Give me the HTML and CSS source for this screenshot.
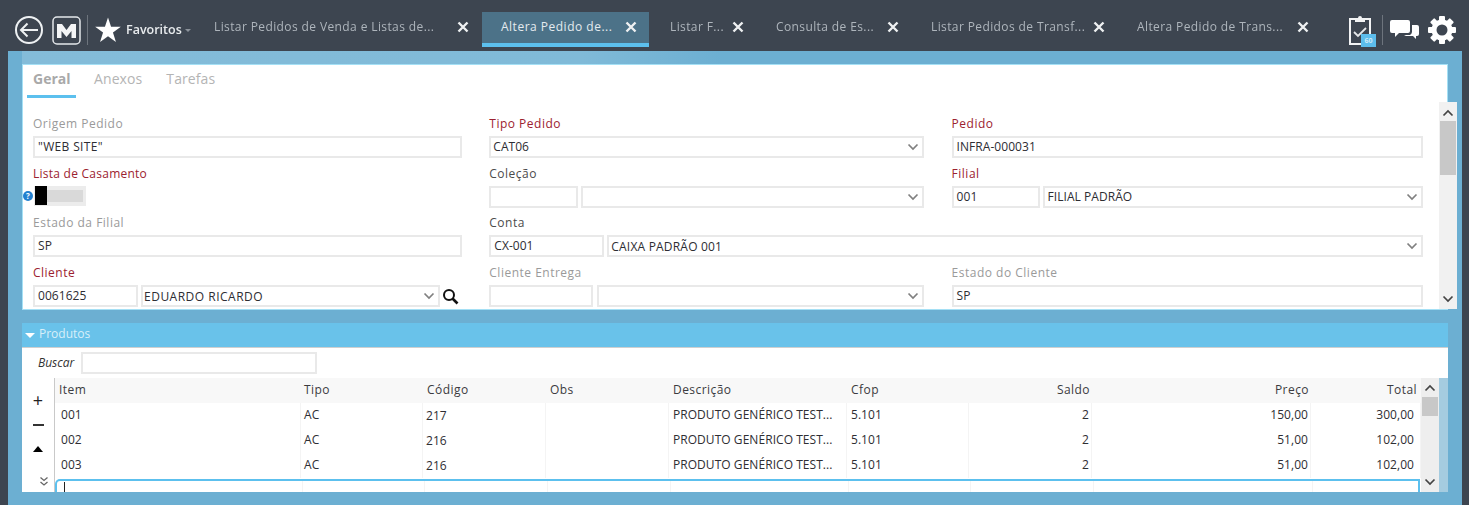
FILE: index.html
```html
<!DOCTYPE html>
<html lang="pt-BR">
<head>
<meta charset="utf-8">
<title>Altera Pedido de Venda</title>
<link rel="stylesheet" href="styles.css">
</head>
<body>
<svg class="defs" width="0" height="0" aria-hidden="true">
  <symbol id="chev" viewBox="0 0 12 8"><path d="M1.500 1.500 6 6l4.500-4.500" fill="none" stroke="currentColor" stroke-width="1.700"/></symbol>
  <symbol id="close" viewBox="0 0 12 12"><path d="M1.500 1.500l9 9M10.500 1.500l-9 9" fill="none" stroke="currentColor" stroke-width="2.400"/></symbol>
</svg>

<header class="topbar">
  <div class="brand">
    <svg class="ic-back" viewBox="0 0 30 30"><circle cx="15" cy="15" r="13" fill="none" stroke="#eef1f3" stroke-width="2"/><path d="M7 15h17M13.500 8.500 7 15l6.500 6.500" fill="none" stroke="#eef1f3" stroke-width="2"/></svg>
    <svg class="ic-m" viewBox="0 0 29 29"><rect x="1" y="1" width="27" height="27" rx="4" fill="none" stroke="#e4e7ea" stroke-width="1.500"/><path d="M5 22V8h5l4.500 6L19 8h5v14h-4.500v-7L14.500 21l-5-6v7z" fill="#f4f5f6"/></svg>
    <span class="vsep"></span>
    <svg class="ic-star" viewBox="0 0 26 26"><path d="M13 .5l3.060 9.290 9.780.04-7.890 5.770 2.990 9.320L13 19.200l-7.940 5.720 2.990-9.320L.16 9.830l9.780-.04z" fill="#fff"/></svg>
    <span class="fav">Favoritos</span><span class="fav-caret"></span>
  </div>
  <nav class="tabs">
    <div class="tab t1"><span>Listar Pedidos de Venda e Listas de...</span><svg class="x"><use href="#close"/></svg></div>
    <div class="tab t2 active"><span>Altera Pedido de...</span><svg class="x"><use href="#close"/></svg></div>
    <div class="tab t3"><span>Listar F...</span><svg class="x"><use href="#close"/></svg></div>
    <div class="tab t4"><span>Consulta de Es...</span><svg class="x"><use href="#close"/></svg></div>
    <div class="tab t5"><span>Listar Pedidos de Transf...</span><svg class="x"><use href="#close"/></svg></div>
    <div class="tab t6"><span>Altera Pedido de Trans...</span><svg class="x"><use href="#close"/></svg></div>
  </nav>
  <div class="tools">
    <div class="clip">
      <svg class="ic-clip" viewBox="0 0 24 30"><path d="M7 4H2v25h20V4h-5" fill="none" stroke="#f2f3f4" stroke-width="2"/><path d="M7 7V3h3a2 2 0 0 1 4 0h3v4z" fill="#f2f3f4"/><path d="M6 17l4 4 8-8" fill="none" stroke="#e6e8ea" stroke-width="1.800"/></svg>
      <span class="badge">60</span>
    </div>
    <span class="vsep vsep-r"></span>
    <svg class="ic-chat" viewBox="0 0 29 20"><path d="M2 0h16a2 2 0 0 1 2 2v9a2 2 0 0 1-2 2H9l-4 4v-4H2a2 2 0 0 1-2-2V2a2 2 0 0 1 2-2z" fill="#fff"/><path d="M22 5h5a2 2 0 0 1 2 2v7a2 2 0 0 1-2 2h-1v3l-3-3h-7l-2-1h6a4 4 0 0 0 2-3z" fill="#fff"/></svg>
    <svg class="ic-gear" viewBox="0 0 28 28">
      <g fill="#fff">
        <rect x="11" y="0" width="6" height="28" rx="1"/>
        <rect x="11" y="0" width="6" height="28" rx="1" transform="rotate(45 14 14)"/>
        <rect x="11" y="0" width="6" height="28" rx="1" transform="rotate(90 14 14)"/>
        <rect x="11" y="0" width="6" height="28" rx="1" transform="rotate(135 14 14)"/>
      </g>
      <circle cx="14" cy="14" r="8" fill="none" stroke="#fff" stroke-width="5"/>
      <circle cx="14" cy="14" r="5.500" fill="#3d4550"/>
    </svg>
  </div>
</header>

<main class="workspace">
  <div class="strip"></div>
  <section class="panel form-panel">
    <div class="subtabs">
      <span class="subtab on">Geral</span>
      <span class="subtab">Anexos</span>
      <span class="subtab">Tarefas</span>
    </div>
    <div class="form-wrap">
      <div class="form">
        <div class="field"><label class="lbl">Origem Pedido</label><div class="inp wide">"WEB SITE"</div></div>
        <div class="field"><label class="lbl req">Tipo Pedido</label><div class="inp sel tipo">CAT06<svg class="chev"><use href="#chev"/></svg></div></div>
        <div class="field"><label class="lbl req">Pedido</label><div class="inp">INFRA-000031</div></div>

        <div class="field help-host"><label class="lbl req tight">Lista de Casamento</label>
          <span class="help">?</span>
          <div class="toggle"><span class="knob"></span><span class="track"></span></div>
        </div>
        <div class="field"><label class="lbl dark">Coleção</label>
          <div class="pair p-col"><div class="inp"></div><div class="inp sel"><svg class="chev"><use href="#chev"/></svg></div></div></div>
        <div class="field"><label class="lbl req">Filial</label>
          <div class="pair p-fil"><div class="inp">001</div><div class="inp sel">FILIAL PADRÃO<svg class="chev"><use href="#chev"/></svg></div></div></div>

        <div class="field"><label class="lbl">Estado da Filial</label><div class="inp">SP</div></div>
        <div class="field span2"><label class="lbl dark">Conta</label>
          <div class="pair p-con"><div class="inp">CX-001</div><div class="inp sel">CAIXA PADRÃO 001<svg class="chev"><use href="#chev"/></svg></div></div></div>

        <div class="field"><label class="lbl req">Cliente</label>
          <div class="pair p-cli"><div class="inp">0061625</div><div class="inp sel">EDUARDO RICARDO<svg class="chev"><use href="#chev"/></svg></div>
            <svg class="ic-search" viewBox="0 0 17 17"><circle cx="7" cy="7" r="5" fill="none" stroke="#111" stroke-width="2"/><path d="M10.500 10.500 15.500 15.500" stroke="#111" stroke-width="2.600"/></svg></div></div>
        <div class="field"><label class="lbl">Cliente Entrega</label>
          <div class="pair p-ent"><div class="inp"></div><div class="inp sel"><svg class="chev"><use href="#chev"/></svg></div></div></div>
        <div class="field"><label class="lbl">Estado do Cliente</label><div class="inp">SP</div></div>
      </div>
      <div class="vscroll form-scroll">
        <svg class="arrow up"><use href="#chev"/></svg>
        <div class="thumb"></div>
        <svg class="arrow"><use href="#chev"/></svg>
      </div>
    </div>
  </section>

  <section class="products">
    <div class="products-head"><span class="tri"></span>Produtos</div>
    <div class="products-body">
      <div class="search"><em>Buscar</em><div class="inp search-inp"></div></div>
      <div class="grid-area">
        <div class="tools-col">
          <span class="t-plus">+</span>
          <span class="t-minus"></span>
          <span class="t-up"></span>
          <svg class="t-more" viewBox="0 0 10 11"><path d="M1.500 1.500 5 4.500l3.500-3M1.500 6 5 9l3.500-3" fill="none" stroke="#666" stroke-width="1.300"/></svg>
        </div>
        <div class="table">
          <div class="row head">
            <span>Item</span><span>Tipo</span><span>Código</span><span>Obs</span><span>Descrição</span><span>Cfop</span><span class="r">Saldo</span><span class="r">Preço</span><span class="r">Total</span>
          </div>
          <div class="row">
            <span class="c-item">001</span><span>AC</span><span class="c-cod">217</span><span></span><span>PRODUTO GENÉRICO TEST...</span><span>5.101</span><span class="r">2</span><span class="r">150,00</span><span class="r c-tot">300,00</span>
          </div>
          <div class="row">
            <span class="c-item">002</span><span>AC</span><span class="c-cod">216</span><span></span><span>PRODUTO GENÉRICO TEST...</span><span>5.101</span><span class="r">2</span><span class="r">51,00</span><span class="r c-tot">102,00</span>
          </div>
          <div class="row">
            <span class="c-item">003</span><span>AC</span><span class="c-cod">216</span><span></span><span>PRODUTO GENÉRICO TEST...</span><span>5.101</span><span class="r">2</span><span class="r">51,00</span><span class="r c-tot">102,00</span>
          </div>
          <div class="row newrow">
            <span class="c-item"><i class="cursor"></i></span><span></span><span></span><span></span><span></span><span></span><span></span><span></span><span></span>
          </div>
        </div>
        <div class="vscroll table-scroll">
          <svg class="arrow up"><use href="#chev"/></svg>
          <div class="thumb"></div>
          <svg class="arrow"><use href="#chev"/></svg>
        </div>
        <div class="edge"></div>
      </div>
    </div>
  </section>
</main>
</body>
</html>
```

FILE: styles.css
```css
* { box-sizing: border-box; }
html, body { margin: 0; height: 100%; }
body {
  width: 1469px;
  height: 505px;
  overflow: hidden;
  background: #3d4550;
  font: 12px/16px "Open Sans", "Noto Sans", sans-serif;
  color: #2e2e33;
  display: flex;
  flex-direction: column;
  filter: blur(0.35px);
}
.defs { position: absolute; }

/* top bar */
.topbar { height: 51px; flex: none; display: flex; align-items: flex-start; }
.brand { width: 195px; flex: none; height: 51px; padding: 9px 0 0 14px; display: flex; align-items: center; }
.ic-back { width: 30px; height: 30px; flex: none; }
.ic-m { width: 29px; height: 29px; margin-left: 8px; flex: none; }
.vsep { width: 1px; height: 30px; background: #6d747d; flex: none; margin-left: 6px; }
.ic-star { width: 26px; height: 26px; margin-left: 7px; flex: none; }
.fav { margin-left: 5px; color: #e9ecee; font-size: 12.500px; font-weight: 600; }
.fav-caret { margin: 0 0 0 3px; border: 3px solid transparent; border-top: 3px solid #8c939b; border-bottom: 0; }
.tabs { display: flex; height: 51px; flex: none; }
.tab {
  height: 35px;
  margin-top: 12px;
  padding: 0 13px 5px 19px;
  display: flex;
  align-items: center;
  justify-content: space-between;
  color: #aeb5bc;
  letter-spacing: .39px;
  flex: none;
  white-space: nowrap;
}
.t1 { width: 287px; }
.t2 { width: 167px; letter-spacing: .5px; }
.t3 { width: 108px; }
.t4 { width: 155px; }
.t5 { width: 206px; }
.t6 { width: 204px; }
.tab.t2 { padding-right: 12px; }
.tab.t3 { margin-left: 0; padding-left: 21px; }
.active { background: #4c7288; color: #e4ebef; border-bottom: 4px solid #5cc0ee; padding-bottom: 1px; }
.x { width: 12px; height: 12px; color: #eef0f2; flex: none; }
.tools { display: flex; align-items: center; height: 51px; padding-top: 9px; margin-left: 27px; }
.clip { position: relative; width: 24px; height: 30px; flex: none; margin-left: -1px; }
.ic-clip { width: 24px; height: 30px; display: block; }
.badge {
  position: absolute; left: 13px; top: 19px; width: 15px; height: 13px;
  background: #5cbdec; color: #cfeaf6; font-size: 7px; line-height: 13px; text-align: center; font-weight: 700;
}
.vsep-r { margin-left: 10px; }
.ic-chat { width: 29px; height: 20px; margin-left: 7px; flex: none; }
.ic-gear { width: 28px; height: 28px; margin-left: 9px; flex: none; }

/* workspace */
.workspace {
  flex: 1;
  margin: 0 7px 0 8px;
  padding: 0 14px 13px;
  background: #6cafd2;
  display: flex;
  flex-direction: column;
  min-height: 0;
}
.strip {
  height: 13px;
  flex: none;
  background: linear-gradient(90deg, #84bcd9 0, #80bad8 560px, #6cafd2 700px);
}
.panel { background: #fff; border: 1px solid #a5e0f5; }
.form-panel { height: 246px; flex: none; display: flex; flex-direction: column; }
.subtabs { height: 35px; flex: none; display: flex; padding-left: 4px; }
.subtab {
  color: #b4b4b4; font-size: 14px; letter-spacing: .1px;
  height: 33px; padding: 6px 6px 0; margin-right: 12px;
  border-bottom: 3px solid transparent;
}
.subtab.on { color: #a9a9a9; font-weight: 700; letter-spacing: 0; border-bottom-color: #5cc0ee; width: 49px; }
.form-wrap { flex: 1; min-height: 0; display: flex; }
.form {
  width: 1400px;
  flex: none;
  margin-left: 10px;
  padding-top: 15px;
  display: grid;
  grid-template-columns: 429px 435px 471px;
  column-gap: 27.300px;
  grid-auto-rows: 49.500px;
}
.field { min-width: 0; position: relative; }
.span2 { grid-column: 2 / 4; }
.lbl { display: block; height: 21px; padding-top: 1px; color: #9a9a9a; letter-spacing: .5px; }
.lbl.req { color: #9c2230; font-weight: 500; }
.lbl.tight { letter-spacing: .25px; }
.lbl.dark { color: #4b4b4b; font-weight: 500; }
.inp {
  height: 22px;
  border: 2px solid #e9e9e9;
  background: #fff;
  padding: 0 3px;
  line-height: 18px;
  letter-spacing: .05px;
  color: #2d2d33;
  white-space: nowrap;
  min-width: 0;
  display: flex;
  align-items: center;
  justify-content: space-between;
}
.wide { letter-spacing: .35px; }
.tipo { padding-left: 2px; }
.sel { flex: 1; }
.chev { width: 12px; height: 8px; color: #808080; flex: none; margin: 0 0 0 auto; }
.pair { display: flex; gap: 3px; align-items: flex-start; }
.p-col > .inp:first-child { width: 89px; flex: none; }
.p-fil > .inp:first-child { width: 88px; flex: none; }
.p-con > .inp:first-child { width: 115px; flex: none; }
.p-cli > .inp:first-child { width: 105px; flex: none; }
.p-ent > .inp:first-child { width: 104px; flex: none; }
.p-ent { gap: 4px; }
.p-con .sel { padding: 2px 3px 0 2px; letter-spacing: .2px; }
.p-cli .sel { letter-spacing: .5px; padding: 2px 3px 0 1px; }
.p-con .chev, .p-cli .chev { margin-top: -2px; }
.ic-search { width: 17px; height: 17px; margin: 3px 3px 0 -1px; flex: none; }
.help {
  position: absolute; left: -10px; top: 26px; width: 10px; height: 10px; border-radius: 50%;
  background: #2280d0; color: #fff; font-size: 8px; line-height: 10px; font-weight: 700; text-align: center;
}
.toggle {
  width: 52px; height: 20px; margin-left: 1px; background: #ececec; display: flex; align-items: center; padding-left: 1px;
}
.knob { width: 12px; height: 19px; background: #000; flex: none; }
.track { width: 36px; height: 12px; background: #d9d9d9; }
.vscroll {
  width: 18px; flex: none; background: #f1f1f1; display: flex; flex-direction: column; align-items: center;
}
.form-scroll { margin: 2px 0 0 6px; padding-top: 7px; }
.thumb { width: 16px; flex: none; background: #c8c8c8; }
.form-scroll .thumb { height: 54px; margin: 4px 0 auto; }
.arrow { width: 12px; height: 8px; color: #444; flex: none; }
.arrow.up { transform: rotate(180deg); }
.form-scroll > .arrow:last-child { margin-bottom: 6px; }

/* produtos */
.products { margin-top: 13px; flex: 1; min-height: 0; display: flex; flex-direction: column; }
.products-head {
  height: 25px; flex: none; background: #69c2ea; color: #d8eff9; font-size: 12px; line-height: 20px;
  padding: 0 0 2px 3px; display: flex; align-items: center;
  border-bottom: 1px solid #cfcfcf;
}
.tri { border: 5px solid transparent; border-top: 5px solid #fff; border-bottom: 0; margin: 2px 4px 0 0; }
.products-body { flex: 1; min-height: 0; background: #fff; display: flex; flex-direction: column; }
.search { height: 30px; flex: none; display: flex; align-items: center; padding-left: 16px; }
.search em { color: #333; font-style: italic; width: 43px; flex: none; }
.search-inp { width: 236px; margin-top: 0; }
.grid-area { flex: 1; min-height: 0; display: flex; }
.tools-col {
  width: 33px; flex: none; border-right: 1px solid #c9c9c9; display: flex; flex-direction: column; align-items: center;
  padding-top: 13px; color: #222; background: #fff;
}
.t-plus { font-size: 18px; line-height: 18px; height: 18px; }
.t-minus { width: 11px; height: 1.500px; background: #333; margin-top: 15px; }
.t-up { border: 5.500px solid transparent; border-bottom: 6px solid #000; border-top: 0; margin-top: 20px; }
.t-more { width: 10px; height: 11px; margin: 24px 0 0 12px; }
.table { width: 1366px; flex: none; display: flex; flex-direction: column; min-width: 0; }
.row {
  display: grid;
  grid-template-columns: 246px 122px 123px 123px 178px 122px 123px 219px 110px;
  height: 25px;
  flex: none;
  line-height: 24px;
  white-space: nowrap;
  letter-spacing: .05px;
}
.row > span { border-right: 1px solid #f4f4f4; padding: 0 4px 0 3px; min-width: 0; overflow: hidden; }
.row > span:nth-child(5), .row > span:nth-child(6) { padding-left: 4px; }
.row > .r { text-align: right; padding-right: 2px; }
.head { background: #f8f8f8; letter-spacing: .45px; font-weight: 500; color: #3b3b40; }
.head > span { border-right: 0; padding-left: 4px; }
.head > span:nth-child(2) { padding-left: 3px; }
.head > .r:last-child { padding-right: 4px; }
.row .c-item { padding-left: 6px; }
.row .c-cod { padding-top: 1px; }
.row .c-tot { padding-right: 6px; }
.newrow {
  height: 13px;
  border: solid #5cc0ee;
  border-width: 2px 2px 0 2px;
  border-top-left-radius: 5px;
  width: 1365px;
  margin-top: 1px;
  overflow: hidden;
  position: relative;
}
.newrow > span { height: 11px; }
.cursor { display: block; width: 1px; height: 10px; margin: 1px 0 0 1px; background: #222; }
.table-scroll { background: #eeeeee; padding-top: 6px; }
.table-scroll .thumb { height: 19px; margin: 5px 0 auto; }
.table-scroll > .arrow:last-child { margin-bottom: 6px; }
.edge { flex: 1; background: #a5cce0; }
```
